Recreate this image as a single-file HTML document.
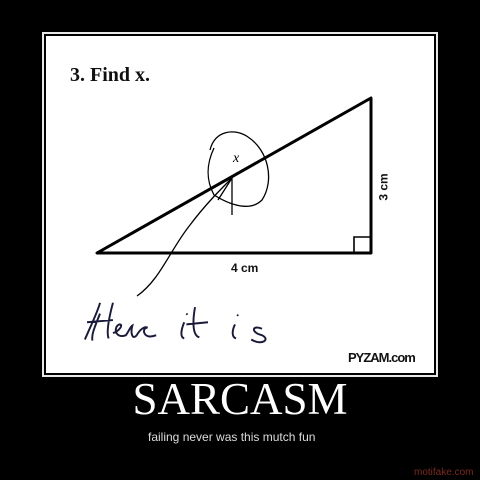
<!DOCTYPE html>
<html><head><style>
body{margin:0;width:480px;height:480px;background:#000;position:relative;overflow:hidden;font-family:"Liberation Sans",sans-serif}
.outer{position:absolute;left:42px;top:32px;width:392px;height:341px;border:2px solid #e8e8e8}
.inner{position:absolute;left:46px;top:36px;width:388px;height:337px;background:#fff}
.t{position:absolute;white-space:nowrap}
</style></head><body>
<div class="outer"></div>
<div class="inner"></div>
<svg width="480" height="480" style="position:absolute;left:0;top:0">
<g stroke="#000" fill="none">
<path d="M97 253 L371 98 L371 253 Z" stroke-width="3" stroke-linejoin="round"/>
<path d="M354 253 V237 H371" stroke-width="1.6"/>
<path d="M210 150 C215 130 235 128 248 137 C268 150 275 180 262 200 C250 212 230 205 214 195 C206 180 206 165 214 148" stroke-width="1.3"/>
<path d="M137 296 C160 280 170 250 190 225 C205 205 220 190 232 178" stroke-width="1.3"/>
<path d="M218 200 L232 178 L232 215" stroke-width="1.3"/>
<g transform="translate(-8,-32) scale(1.08)">
<path d="M86 344 C92 330 98 318 100 310 M100 320 C94 335 92 340 93 345 M88 328 L112 326 M112 310 C108 325 106 338 108 343 M112 338 C118 336 122 330 118 330 C112 332 114 344 124 340 C127 336 128 332 130 331 C128 338 130 345 134 340 C138 333 142 332 144 333 C138 333 140 345 152 340 M178 328 C175 335 174 342 178 343 M180 320 l1 1 M188 314 C186 325 185 340 192 342 M180 330 L200 328 M225 330 C222 336 222 342 226 343 M227 321 l1 1 M250 334 C240 330 240 338 250 340 C258 344 250 350 240 344" stroke-width="1.8" stroke="#1a1a3a"/>
</g>
</g>
<text x="233" y="162" font-family="Liberation Serif" font-style="italic" font-size="14">x</text>
</svg>
<div class="t" style="left:70px;top:64px;font:bold 20px 'Liberation Serif',serif;color:#111">3. Find x.</div>
<div class="t" style="left:231px;top:261px;font:bold 12px 'Liberation Sans';color:#111">4 cm</div>
<div class="t" style="left:370px;top:180px;font:bold 12px 'Liberation Sans';color:#111;transform:rotate(-90deg);transform-origin:center">3 cm</div>
<div class="t" style="left:348px;top:350px;font:bold 13px 'Liberation Sans';color:#111;letter-spacing:-1px">PYZAM.com</div>
<div class="t" style="left:0;width:480px;text-align:center;top:373px;font:45px 'Liberation Serif',serif;color:#fff">SARCASM</div>
<div class="t" style="left:148px;top:430px;font:12px 'Liberation Sans';color:#ddd">failing never was this mutch fun</div>
<div class="t" style="left:414px;top:467px;font:10px 'Liberation Sans';color:#7a2a20">motifake.com</div>
</body></html>
